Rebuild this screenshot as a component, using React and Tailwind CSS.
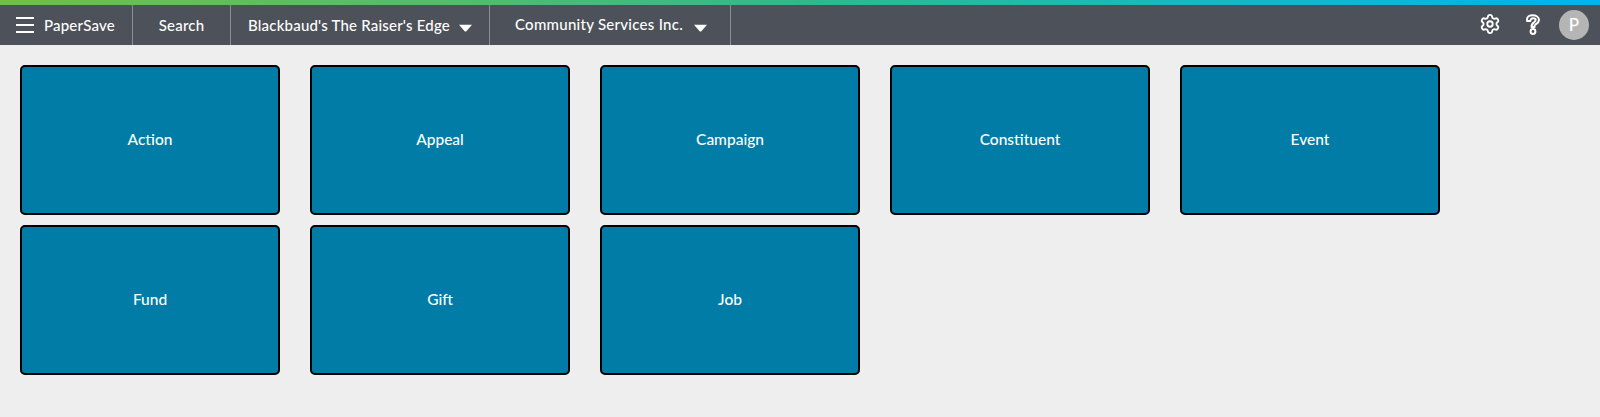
import { Settings } from "lucide-react";

const cards = ["Action", "Appeal", "Campaign", "Constituent", "Event", "Fund", "Gift", "Job"];

const Caret = () => (
  <svg width="13" height="8" viewBox="0 0 12 7" className="shrink-0 mt-[5px]">
    <path d="M0 0.5H12L6.8 6.5Q6 7 5.2 6.5Z" fill="#fff" />
  </svg>
);

const HelpIcon = () => (
  <svg width="16" height="21" viewBox="0 0 16 21" fill="none" stroke="#fff" strokeWidth="2">
    <path d="M2 7V5.5C2 3 4.5 1.2 7.5 1.2C11 1.2 14 3 14 6C14 8.5 12 9.5 10.5 10.5C9.5 11.2 9.5 12 9.5 13H6.5C6.5 10.5 7.5 9.3 9 8.3C10 7.6 10.7 7.1 10.7 6C10.7 4.8 9.3 4.3 8 4.3C6.6 4.3 5.4 5 5.4 7Z" strokeLinejoin="round" />
    <circle cx="8" cy="17.5" r="2.4" />
  </svg>
);

const App = () => {
  return (
    <div className="h-[417px] bg-[#eeeeee] font-['Lato',sans-serif] overflow-hidden">

      <div className="h-[5px] bg-gradient-to-r from-[#71bf44] via-[#2fb98a] to-[#00b4f1]" />

      <div className="h-10 bg-[#4d5159] flex items-stretch text-white text-[15px] tracking-[0.2px] font-medium">

        <div className="w-[133px] flex items-center border-r border-[#8b8e93]">
          <div className="ml-4 mr-[10px] w-[18px] flex flex-col gap-[5px]">
            <div className="h-[2px] bg-white" />
            <div className="h-[2px] bg-white" />
            <div className="h-[2px] bg-white" />
          </div>
          <span>PaperSave</span>
        </div>

        <div className="w-[98px] flex items-center justify-center border-r border-[#8b8e93]">
          Search
        </div>

        <div className="w-[259px] flex items-center pl-[17px] gap-[9px] border-r border-[#8b8e93]">
          <span>Blackbaud's The Raiser's Edge</span>
          <Caret />
        </div>

        <div className="w-[241px] flex items-center pl-[25px] gap-[11px] border-r border-[#8b8e93]">
          <span className="-mt-[1px] tracking-[0.27px]">Community Services Inc.</span>
          <Caret />
        </div>

        <div className="ml-auto flex items-center pr-[11px]">
          <Settings size={22} strokeWidth={2} className="-mt-[2px]" />
          <div className="ml-[24px] -mt-[2px]"><HelpIcon /></div>
          <div className="ml-[18px] w-[30px] h-[30px] rounded-full bg-[#b5b5b5] flex items-center justify-center text-[17px]">
            P
          </div>
        </div>

      </div>

      <div className="pt-5 pl-5 grid grid-cols-[repeat(5,260px)] gap-x-[30px] gap-y-[10px]">
        {
          cards.map((card) => (
            <div
              key={card}
              className="h-[150px] bg-[#007ca6] border-2 border-black rounded-[5px] flex items-center justify-center text-white text-[15.5px] font-medium"
            >
              {card}
            </div>
          ))
        }
      </div>

    </div>
  );
};

export default App;
